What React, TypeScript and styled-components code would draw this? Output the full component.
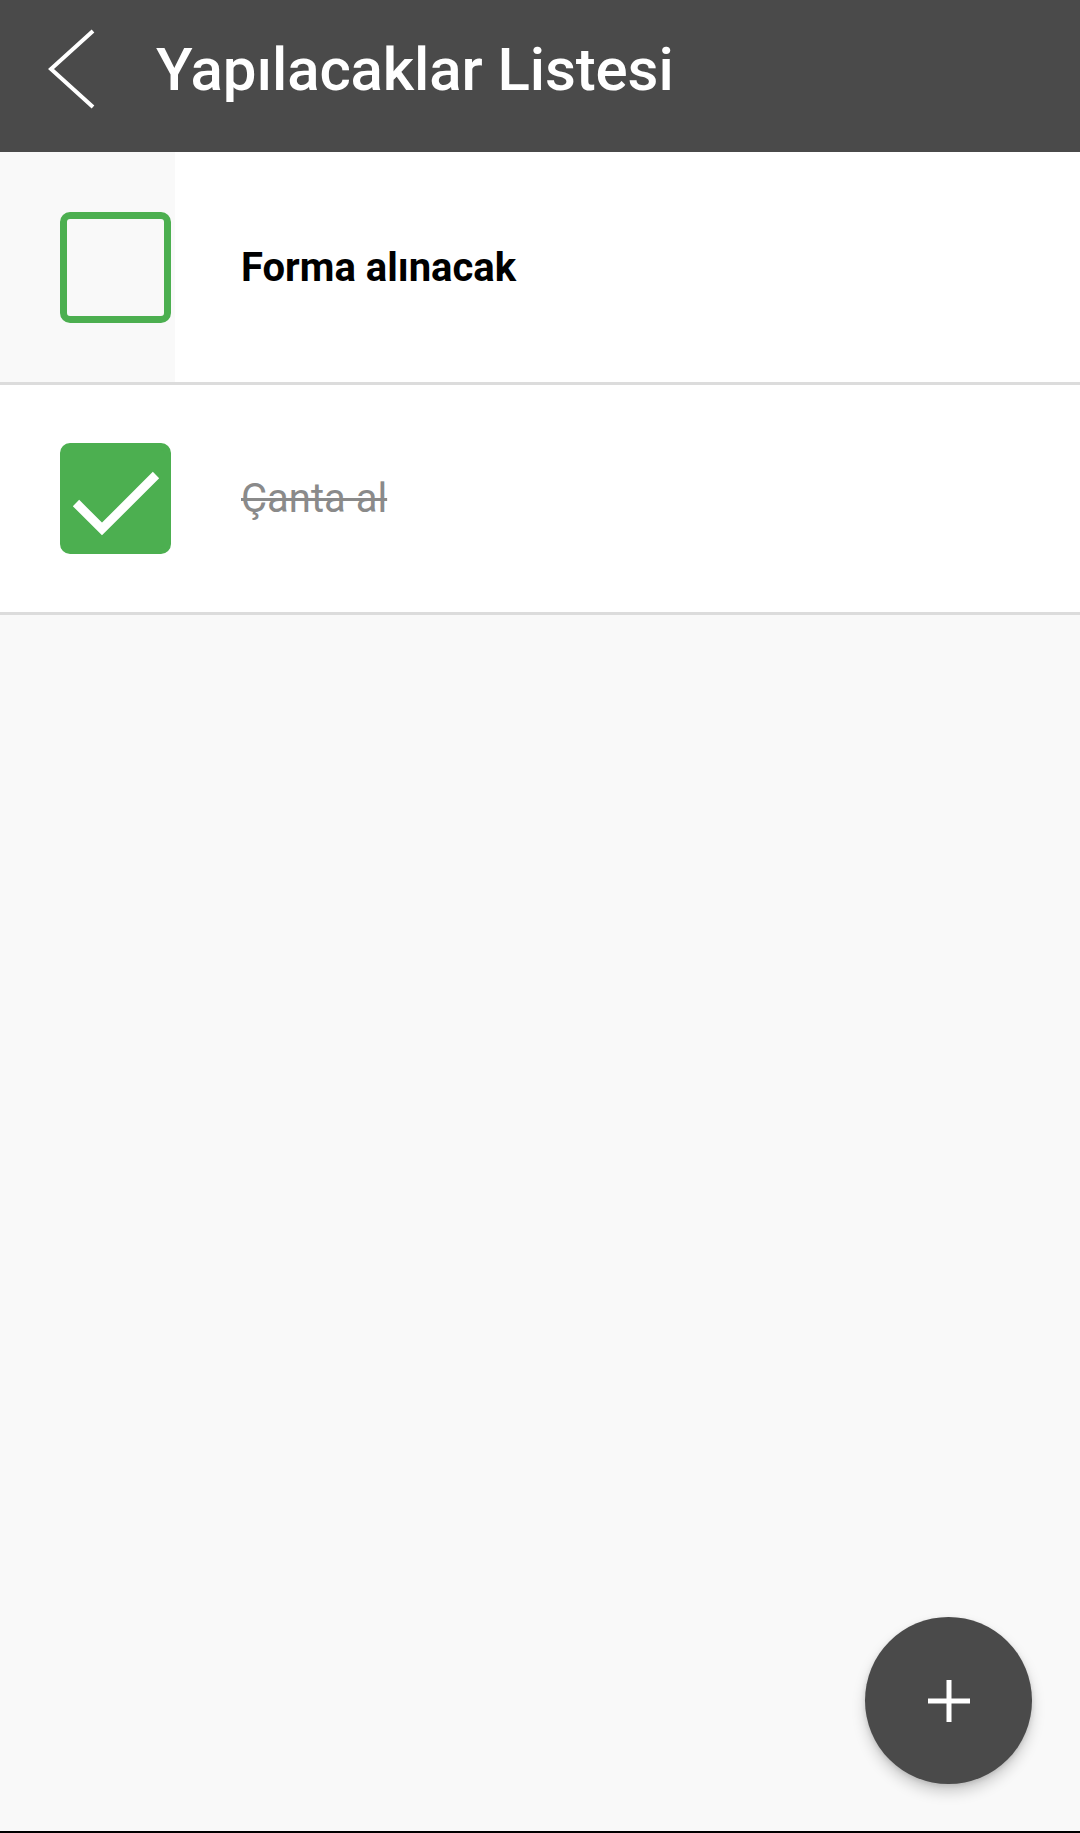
import styled, { createGlobalStyle } from 'styled-components';

const GlobalStyle = createGlobalStyle`
  html, body {
    margin: 0;
    padding: 0;
    background: #f9f9f9;
  }
  body {
    font-family: Roboto, "Noto Sans", "Liberation Sans", sans-serif;
  }
`;

const Screen = styled.div`
  position: relative;
  display: flex;
  flex-direction: column;
  width: 1080px;
  height: 1833px;
  box-sizing: border-box;
  background: #f9f9f9;
  border-bottom: 2px solid #000;
  overflow: hidden;
`;

const Header = styled.header`
  display: flex;
  align-items: center;
  height: 152px;
  padding: 0 0 14px 48px;
  box-sizing: border-box;
  background: #4a4a4a;
  flex-shrink: 0;
`;

const BackButton = styled.button`
  display: flex;
  align-items: center;
  padding: 0;
  border: none;
  background: none;
  cursor: pointer;
`;

const Title = styled.h1`
  margin: 0 0 0 60px;
  font-size: 60px;
  font-weight: 500;
  color: #fff;
  letter-spacing: -0.1px;
`;

const List = styled.ul`
  margin: 0;
  padding: 0;
  list-style: none;
`;

const Row = styled.li<{ $first?: boolean }>`
  display: flex;
  align-items: center;
  height: ${p => (p.$first ? 230 : 227)}px;
  background: #fff;
  border-bottom: 3px solid #dcdcdc;
`;

const CheckCell = styled.div<{ $pressed?: boolean }>`
  display: flex;
  align-items: center;
  align-self: stretch;
  width: 175px;
  padding-left: 60px;
  box-sizing: border-box;
  background: ${p => (p.$pressed ? '#f9f9f9' : 'transparent')};
`;

const Box = styled.div<{ $checked?: boolean }>`
  display: flex;
  align-items: center;
  justify-content: center;
  width: 111px;
  height: 111px;
  box-sizing: border-box;
  border-radius: 10px;
  border: 7px solid #4caf50;
  background: ${p => (p.$checked ? '#4caf50' : 'transparent')};
`;

const Label = styled.span<{ $done?: boolean }>`
  margin-left: 66px;
  font-size: 40px;
  font-weight: ${p => (p.$done ? 400 : 700)};
  color: ${p => (p.$done ? '#8a8a8a' : '#000')};
  text-decoration: ${p => (p.$done ? 'line-through' : 'none')};
  text-decoration-thickness: 3px;
`;

const Fab = styled.button`
  position: absolute;
  right: 48px;
  bottom: 47px;
  display: flex;
  align-items: center;
  justify-content: center;
  width: 167px;
  height: 167px;
  padding: 0;
  border: none;
  border-radius: 50%;
  background: #4a4a4a;
  box-shadow: 0 8px 14px rgba(0, 0, 0, 0.18), 0 2px 5px rgba(0, 0, 0, 0.12);
  cursor: pointer;
`;

const todos = [
  { id: 1, text: 'Forma alınacak', done: false, pressed: true },
  { id: 2, text: 'Çanta al', done: true, pressed: false },
];

const App = () => {
  return (
    <Screen>
      <GlobalStyle />
      <Header>
        <BackButton aria-label="Geri">
          <svg width="48" height="80" viewBox="0 0 48 80">
            <polyline points="45,2 3,40 45,78" fill="none" stroke="#fff" strokeWidth="4" />
          </svg>
        </BackButton>
        <Title>Yapılacaklar Listesi</Title>
      </Header>

      <List>
        {todos.map((todo, i) => (
          <Row key={todo.id} $first={i === 0}>
            <CheckCell $pressed={todo.pressed}>
              <Box $checked={todo.done}>
                {todo.done && (
                  <svg width="97" height="97" viewBox="0 0 97 97">
                    <polyline points="9,53 35,79 89,25" fill="none" stroke="#fff" strokeWidth="9" />
                  </svg>
                )}
              </Box>
            </CheckCell>
            <Label $done={todo.done}>{todo.text}</Label>
          </Row>
        ))}
      </List>

      <Fab aria-label="Ekle">
        <svg width="44" height="44" viewBox="0 0 44 44">
          <path d="M22 1v42M1 22h42" stroke="#fff" strokeWidth="5" />
        </svg>
      </Fab>
    </Screen>
  );
};

export default App;
